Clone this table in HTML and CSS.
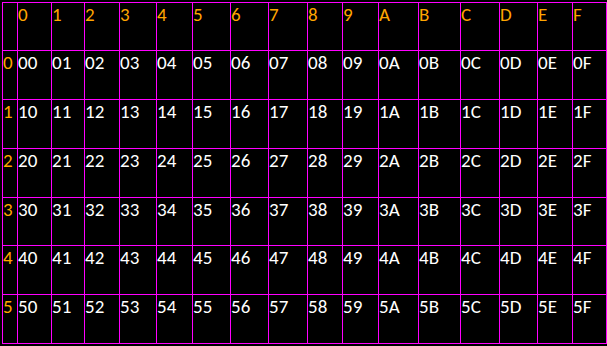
FILE: index.html
```html
<!DOCTYPE html>
<html>
<head>
<meta charset="utf-8">
<link rel="stylesheet" href="styles.css">
</head>
<body>
<div class="table">
<div class="cell"></div><div class="cell head">0</div><div class="cell head">1</div><div class="cell head">2</div><div class="cell head">3</div><div class="cell head">4</div><div class="cell head">5</div><div class="cell head">6</div><div class="cell head">7</div><div class="cell head">8</div><div class="cell head">9</div><div class="cell head">A</div><div class="cell head">B</div><div class="cell head">C</div><div class="cell head">D</div><div class="cell head">E</div><div class="cell head">F</div>
<div class="cell head">0</div><div class="cell">00</div><div class="cell">01</div><div class="cell">02</div><div class="cell">03</div><div class="cell">04</div><div class="cell">05</div><div class="cell">06</div><div class="cell">07</div><div class="cell">08</div><div class="cell">09</div><div class="cell">0A</div><div class="cell">0B</div><div class="cell">0C</div><div class="cell">0D</div><div class="cell">0E</div><div class="cell">0F</div>
<div class="cell head">1</div><div class="cell">10</div><div class="cell">11</div><div class="cell">12</div><div class="cell">13</div><div class="cell">14</div><div class="cell">15</div><div class="cell">16</div><div class="cell">17</div><div class="cell">18</div><div class="cell">19</div><div class="cell">1A</div><div class="cell">1B</div><div class="cell">1C</div><div class="cell">1D</div><div class="cell">1E</div><div class="cell">1F</div>
<div class="cell head">2</div><div class="cell">20</div><div class="cell">21</div><div class="cell">22</div><div class="cell">23</div><div class="cell">24</div><div class="cell">25</div><div class="cell">26</div><div class="cell">27</div><div class="cell">28</div><div class="cell">29</div><div class="cell">2A</div><div class="cell">2B</div><div class="cell">2C</div><div class="cell">2D</div><div class="cell">2E</div><div class="cell">2F</div>
<div class="cell head">3</div><div class="cell">30</div><div class="cell">31</div><div class="cell">32</div><div class="cell">33</div><div class="cell">34</div><div class="cell">35</div><div class="cell">36</div><div class="cell">37</div><div class="cell">38</div><div class="cell">39</div><div class="cell">3A</div><div class="cell">3B</div><div class="cell">3C</div><div class="cell">3D</div><div class="cell">3E</div><div class="cell">3F</div>
<div class="cell head">4</div><div class="cell">40</div><div class="cell">41</div><div class="cell">42</div><div class="cell">43</div><div class="cell">44</div><div class="cell">45</div><div class="cell">46</div><div class="cell">47</div><div class="cell">48</div><div class="cell">49</div><div class="cell">4A</div><div class="cell">4B</div><div class="cell">4C</div><div class="cell">4D</div><div class="cell">4E</div><div class="cell">4F</div>
<div class="cell head">5</div><div class="cell">50</div><div class="cell">51</div><div class="cell">52</div><div class="cell">53</div><div class="cell">54</div><div class="cell">55</div><div class="cell">56</div><div class="cell">57</div><div class="cell">58</div><div class="cell">59</div><div class="cell">5A</div><div class="cell">5B</div><div class="cell">5C</div><div class="cell">5D</div><div class="cell">5E</div><div class="cell">5F</div>
</div>
</body>
</html>
```
FILE: styles.css
```css
html, body {
  margin: 0;
  padding: 0;
  background: #000;
}
body {
  padding: 2px;
  width: 607px;
  height: 346px;
  box-sizing: border-box;
  overflow: hidden;
}
.table {
  display: grid;
  grid-template-columns: 14px 33px 32px 34px 36px 35px 37px 37px 38px 34px 35px 39px 41px 38px 37px 34px 33px;
  grid-template-rows: 47px 48px 48px 48px 47px 48px 48px;
  gap: 1px;
  width: max-content;
  background: #ff00ff;
  border: 1px solid #ff00ff;
  font-family: "Carlito", "Calibri", "Lato", "Open Sans", sans-serif;
  font-size: 19px;
  line-height: 1.2;
}
.cell {
  background: #000;
  color: #fff;
  padding: 1px 0 0 0;
  white-space: nowrap;
  overflow: hidden;
}
.head {
  color: #ffa500;
}
```
